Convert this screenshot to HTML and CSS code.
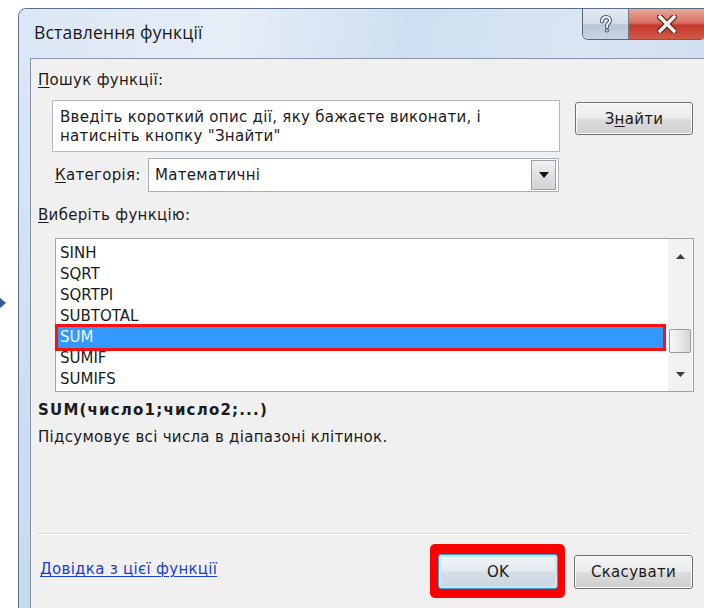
FILE: index.html
```html
<!DOCTYPE html>
<html lang="uk">
<head>
<meta charset="utf-8">
<title>Вставлення функції</title>
<link rel="stylesheet" href="styles.css">
</head>
<body>
<svg class="pointer" width="8" height="14" viewBox="0 0 8 14"><path d="M0 2 L6 7 L0 12 Z" fill="#2b5b9b"/></svg>
<div class="window">
  <div class="titlebar">
    <span class="title">Вставлення функції</span>
    <div class="caption">
      <div class="cap help">
        <svg width="16" height="18" viewBox="0 0 16 18"><path d="M4 6.5 C4 3 6 2 8 2 C10.5 2 12 3.5 12 5.5 C12 8 9 8.5 9 11 L9 12" fill="none" stroke="#4a5868" stroke-width="4" stroke-linecap="round"/><path d="M4 6.5 C4 3 6 2 8 2 C10.5 2 12 3.5 12 5.5 C12 8 9 8.5 9 11 L9 12" fill="none" stroke="#eef2f7" stroke-width="2" stroke-linecap="round"/><circle cx="9" cy="15.5" r="2" fill="#4a5868"/><circle cx="9" cy="15.5" r="1" fill="#eef2f7"/></svg>
      </div>
      <div class="cap close">
        <svg width="20" height="18" viewBox="0 0 20 18"><path d="M3 2 L17 16 M17 2 L3 16" stroke="#5a2a24" stroke-width="6" stroke-linecap="square"/><path d="M3 2 L17 16 M17 2 L3 16" stroke="#f4f0ee" stroke-width="3.4" stroke-linecap="square"/></svg>
      </div>
    </div>
  </div>
  <div class="client">
    <div class="label first"><u>П</u>ошук функції:</div>
    <div class="search-row">
      <div class="search-box">Введіть короткий опис дії, яку бажаєте виконати, і<br>натисніть кнопку "Знайти"</div>
      <div class="btn find">З<u>н</u>айти</div>
    </div>
    <div class="cat-row">
      <span class="cat-label"><u>К</u>атегорія:</span>
      <div class="select">
        <span class="select-value">Математичні</span>
        <div class="drop"><svg width="10" height="6" viewBox="0 0 10 6"><path d="M0 0 H10 L5 6 Z" fill="#111"/></svg></div>
      </div>
    </div>
    <div class="label pick"><u>В</u>иберіть функцію:</div>
    <div class="list">
      <div class="items">
        <div class="item">SINH</div>
        <div class="item">SQRT</div>
        <div class="item">SQRTPI</div>
        <div class="item">SUBTOTAL</div>
        <div class="item selected">SUM</div>
        <div class="item">SUMIF</div>
        <div class="item">SUMIFS</div>
      </div>
      <div class="scrollbar">
        <svg class="arrow" width="9" height="5" viewBox="0 0 9 5"><path d="M0 5 L4.5 0 L9 5 Z" fill="#3c3c3c"/></svg>
        <div class="track"><div class="thumb"></div></div>
        <svg class="arrow" width="9" height="5" viewBox="0 0 9 5"><path d="M0 0 L4.5 5 L9 0 Z" fill="#3c3c3c"/></svg>
      </div>
    </div>
    <div class="sig">SUM(число1;число2;...)</div>
    <div class="desc">Підсумовує всі числа в діапазоні клітинок.</div>
    <div class="sep"></div>
    <div class="footer">
      <a class="help-link" href="#">Довідка з цієї функції</a>
      <div class="ok-ring"><div class="btn ok">OK</div></div>
      <div class="btn cancel">Скасувати</div>
    </div>
  </div>
</div>
</body>
</html>
```

FILE: styles.css
```css
html, body {
  margin: 0;
  width: 704px;
  height: 608px;
  overflow: hidden;
  background: #ffffff;
}

body {
  position: relative;
  font-family: "DejaVu Sans", sans-serif;
  font-size: 15px;
  letter-spacing: 0.3px;
  color: #1b1b1b;
}

/* annotation pointer at the left margin */
.pointer {
  position: absolute;
  left: 0;
  top: 296px;
}

.window {
  margin: 8px 0 0 18px;
  width: 704px;
  height: 620px;
  box-sizing: border-box;
  border: 1px solid #5d6f86;
  border-radius: 8px 8px 0 0;
  background: linear-gradient(180deg, #dde8f5 0%, #d2e1f2 40%, #c6daf0 100%);
  display: flex;
  flex-direction: column;
}

.titlebar {
  height: 49px;
  display: flex;
  justify-content: space-between;
  align-items: flex-start;
  background: linear-gradient(100deg, #dbe7f4 0%, #e6eef8 30%, #cfdff1 55%, #d9e6f4 80%, #cfdef0 100%);
  border-radius: 8px 8px 0 0;
}

.title {
  font-family: "Open Sans", "Noto Sans", sans-serif;
  font-size: 17.5px;
  letter-spacing: 0.2px;
  color: #1a1a1a;
  margin: 11px 0 0 15px;
}

.caption {
  display: flex;
  margin-right: 15px;
  height: 30px;
  border: 1px solid #5a6578;
  border-top: none;
  border-radius: 0 0 6px 6px;
  overflow: hidden;
}

.cap {
  height: 30px;
  display: flex;
  align-items: center;
  justify-content: center;
}

.help {
  width: 45px;
  background: linear-gradient(180deg, #e3eaf3 0%, #d2dce8 50%, #b9c7d8 52%, #c6d3e2 100%);
  border-right: 1px solid #6e7a8c;
}

.close {
  width: 76px;
  background: linear-gradient(180deg, #e9a89d 0%, #d8705f 45%, #c4382a 55%, #d25a46 100%);
}

.client {
  margin: 0 12px 0 11px;
  flex: 1;
  background: #f0f0f0;
  border: 1px solid #8795a8;
  display: flex;
  flex-direction: column;
  padding-bottom: 4px;
}

.label {
  line-height: 20px;
  margin-left: 7px;
}

.label.first { margin-top: 11px; }
.label.pick { margin-top: 13px; }

u { text-decoration-thickness: 1px; text-underline-offset: 2px; }

.search-row {
  display: flex;
  align-items: flex-start;
  margin: 10px 0 0 21px;
}

.search-box {
  width: 508px;
  height: 52px;
  box-sizing: border-box;
  background: #ffffff;
  border: 1px solid #b4b8bf;
  padding: 7px 0 0 7px;
  line-height: 19px;
}

.btn {
  box-sizing: border-box;
  display: flex;
  align-items: center;
  justify-content: center;
  border: 1px solid #707070;
  border-radius: 3px;
  background: linear-gradient(180deg, #f4f4f4 0%, #ebebeb 48%, #dddddd 52%, #cfcfcf 100%);
  box-shadow: inset 0 0 0 1px #fbfbfb;
}

.find {
  width: 118px;
  height: 33px;
  margin: 2px 0 0 15px;
}

.cat-row {
  display: flex;
  align-items: center;
  margin: 6px 0 0 24px;
}

.cat-label {
  width: 93px;
}

.select {
  width: 411px;
  height: 34px;
  box-sizing: border-box;
  border: 1px solid #a9afb7;
  background: #ffffff;
  display: flex;
  align-items: center;
  justify-content: space-between;
  padding: 0 2px 0 6px;
}

.drop {
  width: 25px;
  height: 30px;
  box-sizing: border-box;
  border: 1px solid #9aa0a8;
  background: linear-gradient(180deg, #f2f2f2 0%, #e0e0e0 50%, #d2d2d2 100%);
  display: flex;
  align-items: center;
  justify-content: center;
}

.list {
  margin: 13px 0 0 24px;
  width: 639px;
  height: 154px;
  box-sizing: border-box;
  border: 1px solid #a3a3a3;
  background: #ffffff;
  display: flex;
  justify-content: space-between;
}

.items {
  margin: 4px 0 0 2px;
  width: 605px;
}

.item {
  height: 21px;
  line-height: 21px;
  padding-left: 2px;
  letter-spacing: 0;
}

.item.selected {
  background: #3399ff;
  color: #eef5ff;
  outline: 3px solid #ff1010;
  position: relative;
}

.scrollbar {
  width: 24px;
  margin-right: 1px;
  background: #f1f1f1;
  display: flex;
  flex-direction: column;
  align-items: center;
  padding: 15px 0 14px;
}

.track {
  flex: 1;
  align-self: stretch;
  display: flex;
  flex-direction: column;
  justify-content: flex-end;
  padding: 0 1px 19px;
}

.thumb {
  height: 24px;
  box-sizing: border-box;
  border: 1px solid #9c9c9c;
  border-radius: 2px;
  background: linear-gradient(90deg, #f7f7f7 0%, #e8e8e8 50%, #d6d6d6 100%);
}

.sig {
  margin: 8px 0 0 7px;
  line-height: 20px;
  font-weight: bold;
  letter-spacing: 1.2px;
}

.desc {
  margin: 7px 0 0 7px;
  line-height: 20px;
}

.sep {
  margin: 86px 0 0 7px;
  width: 652px;
  height: 1px;
  background: #dadada;
  border-bottom: 1px solid #fafafa;
}

.footer {
  margin-top: 9px;
  display: flex;
  align-items: flex-start;
  padding-right: 15px;
}

.help-link {
  margin: 16px 0 0 9px;
  color: #1a3fd0;
  text-decoration: underline;
  text-decoration-thickness: 1px;
  text-underline-offset: 2px;
}

.ok-ring {
  margin-left: auto;
  padding: 10px 7px 9px 8px;
  background: #ff0000;
  border-radius: 5px;
}

.ok {
  width: 120px;
  height: 35px;
  border-color: #3d9fd6;
  background: linear-gradient(180deg, #f0f4f7 0%, #e3eaef 48%, #d5dee5 52%, #cbd6de 100%);
  box-shadow: inset 0 0 0 2px #c2e8f9;
}

.cancel {
  width: 119px;
  height: 34px;
  margin: 11px 0 0 9px;
}
```
